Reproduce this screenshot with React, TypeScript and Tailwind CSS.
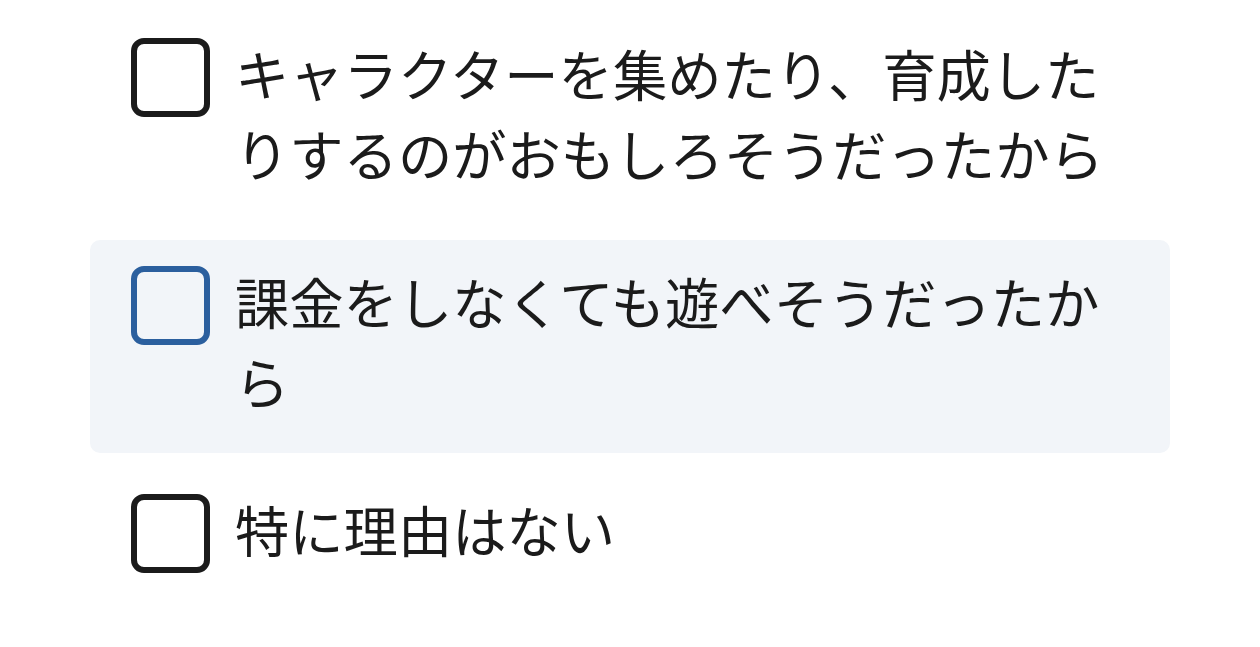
const options = [
  { label: 'キャラクターを集めたり、育成したりするのがおもしろそうだったから', active: false },
  { label: '課金をしなくても遊べそうだったから', active: true },
  { label: '特に理由はない', active: false },
]

function Checkbox({ active }: { active: boolean }) {
  return (
    <span
      className={
        active
          ? 'mt-px block h-[79px] w-[79px] shrink-0 rounded-[13px] border-[6px] border-[#2b5f9e] bg-transparent'
          : 'mt-px block h-[79px] w-[79px] shrink-0 rounded-[13px] border-[6px] border-[#1b1b1b] bg-white'
      }
    />
  )
}

export default function App() {
  return (
    <div className="min-h-[647px] w-full bg-white pt-3 font-['Noto_Sans_CJK_JP','Noto_Sans',sans-serif] text-[#1b1b1b]">
      <div className="mx-[90px] flex flex-col gap-[15px]">
        {options.map((o) => (
          <label
            key={o.label}
            className={
              o.active
                ? 'flex gap-[25px] rounded-[10px] bg-[#f2f5f9] pb-[32px] pl-[41px] pr-[30px] pt-[25px]'
                : 'flex gap-[25px] rounded-[10px] pb-[32px] pl-[41px] pr-[30px] pt-[25px]'
            }
          >
            <Checkbox active={o.active} />
            <span className="-mt-[4px] text-[54.3px] leading-[80px]">{o.label}</span>
          </label>
        ))}
      </div>
    </div>
  )
}
